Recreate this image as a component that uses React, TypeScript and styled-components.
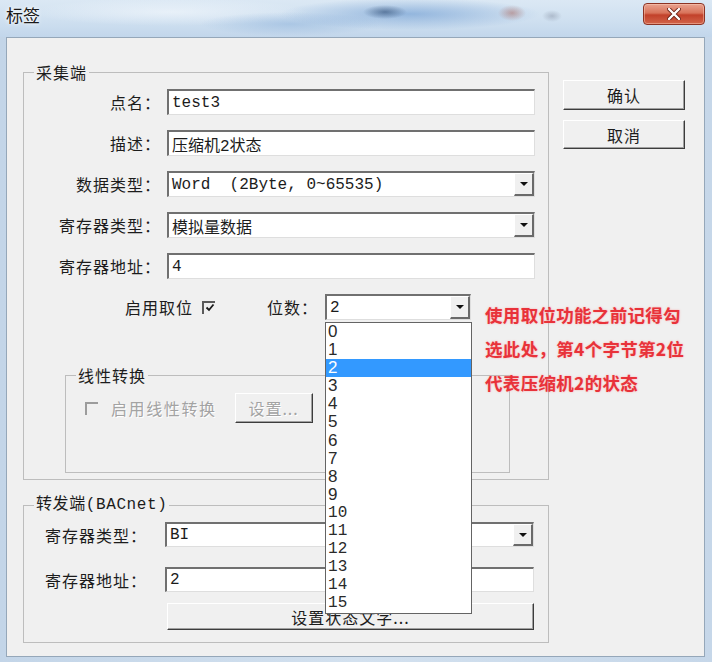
import styled, { createGlobalStyle } from "styled-components";

const UI_FONT = `"Noto Sans CJK SC", "Liberation Sans", sans-serif`;
const MONO_FONT = `"Liberation Mono", "Noto Sans CJK SC", monospace`;

const GlobalStyle = createGlobalStyle`
  html, body {
    margin: 0;
    padding: 0;
  }
  body {
    background: #ffffff;
    font-family: ${UI_FONT};
    color: #1c1c1c;
  }
`;

const Window = styled.div`
  width: 712px;
  height: 662px;
  display: flex;
  flex-direction: column;
  background: linear-gradient(90deg, #c3d5e8 0%, #d3e1ef 50%, #c6d7e9 100%);
`;

const TitleBar = styled.div`
  height: 37px;
  flex: none;
  display: flex;
  align-items: flex-start;
  justify-content: space-between;
  padding: 0 7px 0 6px;
  background:
    radial-gradient(ellipse 22px 7px at 385px 12px, rgba(45, 75, 115, 0.6), transparent),
    radial-gradient(ellipse 14px 8px at 512px 13px, rgba(170, 100, 90, 0.5), transparent),
    radial-gradient(ellipse 10px 6px at 552px 16px, rgba(120, 130, 150, 0.4), transparent),
    radial-gradient(ellipse 130px 16px at 410px 14px, rgba(95, 145, 205, 0.55), transparent),
    radial-gradient(ellipse 90px 12px at 290px 24px, rgba(130, 170, 215, 0.45), transparent),
    radial-gradient(ellipse 140px 14px at 170px 12px, rgba(245, 249, 253, 0.6), transparent),
    linear-gradient(180deg, #dbe8f4 0%, #cfe0f0 55%, #c2d6eb 100%);
`;

const Title = styled.span`
  font-size: 17px;
  line-height: 30px;
  color: #1a1a1a;
  text-shadow: 0 0 5px #ffffff, 0 0 2px #ffffff;
`;

const CloseButton = styled.div`
  margin-top: 3px;
  width: 62px;
  height: 22px;
  box-sizing: border-box;
  border: 1px solid #8c3324;
  border-radius: 4px;
  background: linear-gradient(180deg, #e9a28f 0%, #d8735a 45%, #c2412a 55%, #d2644a 100%);
  display: flex;
  align-items: center;
  justify-content: center;
  box-shadow: inset 0 0 0 1px rgba(255, 210, 190, 0.45);
`;

const Client = styled.div`
  flex: 1;
  margin: 0 7px 5px 6px;
  border: 1px solid #95a7b9;
  background: #f0f0f0;
  display: flex;
  align-items: flex-start;
  gap: 14px;
  padding: 25px 0 13px 16px;
`;

const LeftColumn = styled.div`
  width: 526px;
  display: flex;
  flex-direction: column;
  gap: 16px;
`;

const RightColumn = styled.div`
  width: 122px;
  padding-top: 17px;
  display: flex;
  flex-direction: column;
  gap: 10px;
`;

const Group = styled.fieldset<{ $pad: string; $margin?: string }>`
  margin: ${({ $margin }) => $margin ?? "0"};
  padding: ${({ $pad }) => $pad};
  min-width: 0;
  border: 1px solid #bdbdbd;
`;

const Legend = styled.legend<{ $mono?: boolean }>`
  margin-left: 10px;
  padding: 0 2px;
  font-family: ${({ $mono }) => ($mono ? MONO_FONT : UI_FONT)};
  font-size: 16px;
  line-height: 18px;
  letter-spacing: ${({ $mono }) => ($mono ? "0.6px" : "1px")};
  color: #1c1c1c;
`;

const Stack = styled.div<{ $gap: number; $indent?: number }>`
  display: flex;
  flex-direction: column;
  gap: ${({ $gap }) => $gap}px;
  padding-left: ${({ $indent }) => $indent ?? 0}px;
`;

const FormRow = styled.div<{ $labelWidth: number; $gap: number }>`
  display: grid;
  grid-template-columns: ${({ $labelWidth }) => $labelWidth}px 1fr;
  column-gap: ${({ $gap }) => $gap}px;
  align-items: center;
`;

const FieldLabel = styled.span<{ $align?: "left" | "right" }>`
  font-size: 16px;
  line-height: 20px;
  letter-spacing: 1px;
  white-space: nowrap;
  text-align: ${({ $align }) => $align ?? "right"};
`;

const TextBox = styled.div<{ $h?: number }>`
  height: ${({ $h }) => $h ?? 26}px;
  box-sizing: border-box;
  background: #ffffff;
  border-style: solid;
  border-width: 2px 1px 1px 2px;
  border-color: #707070 #dedede #dedede #707070;
  display: flex;
  align-items: center;
  padding-left: 3px;
  font-family: ${MONO_FONT};
  font-size: 16px;
  color: #1c1c1c;
  white-space: pre;
  overflow: hidden;
`;

const ComboBox = styled(TextBox)`
  justify-content: space-between;
  overflow: visible;
  position: relative;
`;

const DropButton = styled.span`
  width: 20px;
  align-self: stretch;
  box-sizing: border-box;
  background: #f0f0f0;
  border-style: solid;
  border-width: 1px 2px 2px 1px;
  border-color: #ffffff #6a6a6a #6a6a6a #ffffff;
  display: flex;
  align-items: center;
  justify-content: center;

  &::after {
    content: "";
    border-left: 4px solid transparent;
    border-right: 4px solid transparent;
    border-top: 4px solid #111111;
  }
`;

const BitRow = styled.div`
  display: flex;
  align-items: center;
  margin-top: 15px;
  padding-left: 101px;
`;

const CheckText = styled.span<{ $disabled?: boolean }>`
  font-size: 16px;
  line-height: 20px;
  letter-spacing: ${({ $disabled }) => ($disabled ? "1.6px" : "1px")};
  color: ${({ $disabled }) => ($disabled ? "#a3a3a3" : "#1c1c1c")};
  text-shadow: ${({ $disabled }) => ($disabled ? "1px 1px 0 #ffffff" : "none")};
  white-space: nowrap;
`;

const CheckBox = styled.span<{ $disabled?: boolean }>`
  width: 13px;
  height: 13px;
  flex: none;
  box-sizing: border-box;
  border-style: solid;
  border-width: 2px 0 0 2px;
  border-color: ${({ $disabled }) => ($disabled ? "#9c9c9c" : "#5a5a5a")};
  display: inline-flex;
  align-items: center;
  justify-content: center;
`;

const BitCount = styled.div`
  position: relative;
  width: 146px;
  margin-left: 7px;
`;

const BitLabel = styled(FieldLabel)`
  margin-left: 52px;
`;

const DropList = styled.div`
  position: absolute;
  top: calc(100% + 2px);
  left: 0;
  width: 147px;
  box-sizing: border-box;
  background: #ffffff;
  border: 1px solid #646464;
  z-index: 5;
`;

const ListItem = styled.div<{ $selected?: boolean; $serif?: boolean }>`
  height: 18.1px;
  line-height: 18px;
  padding-left: 2px;
  font-family: ${({ $serif }) => ($serif ? MONO_FONT : `"Liberation Sans", sans-serif`)};
  font-size: ${({ $serif }) => ($serif ? "16px" : "17px")};
  color: ${({ $selected }) => ($selected ? "#ffffff" : "#2a2a2a")};
  background: ${({ $selected }) => ($selected ? "#3399ff" : "transparent")};
`;

const Annotation = styled.div`
  position: absolute;
  top: 4px;
  left: calc(100% + 14px);
  white-space: nowrap;
  font-size: 17.5px;
  font-weight: 700;
  line-height: 34px;
  letter-spacing: 0.3px;
  color: #e8323a;
  text-shadow: 0 0 2px rgba(255, 140, 140, 0.7);
  z-index: 6;
`;

const LinearRow = styled.div`
  display: flex;
  align-items: center;
  padding-left: 19px;
`;

const PushButton = styled.div<{ $h: number; $w?: number; $disabled?: boolean }>`
  height: ${({ $h }) => $h}px;
  width: ${({ $w }) => ($w ? `${$w}px` : "auto")};
  flex: none;
  box-sizing: border-box;
  background: #f0f0f0;
  border-style: solid;
  border-width: 1px;
  border-color: #ffffff #3c3c3c #3c3c3c #ffffff;
  box-shadow: inset -1px -1px 0 #a0a0a0;
  display: flex;
  align-items: center;
  justify-content: center;
  font-size: 16px;
  letter-spacing: 1px;
  color: ${({ $disabled }) => ($disabled ? "#a3a3a3" : "#1c1c1c")};
  text-shadow: ${({ $disabled }) => ($disabled ? "1px 1px 0 #ffffff" : "none")};
  white-space: nowrap;
`;

const CheckMark = () => (
  <svg width="10" height="10" viewBox="0 0 10 10">
    <path d="M1.5 4.5 L4 7 L8.5 1.5" fill="none" stroke="#1a1a1a" strokeWidth="1.8" />
  </svg>
);

const CloseGlyph = () => (
  <svg width="14" height="12" viewBox="0 0 14 12">
    <path d="M2 1 L12 11 M12 1 L2 11" stroke="#6b2217" strokeWidth="4" strokeLinecap="round" />
    <path d="M2 1 L12 11 M12 1 L2 11" stroke="#ffffff" strokeWidth="2.4" strokeLinecap="round" />
  </svg>
);

const bits = Array.from({ length: 16 }, (_, i) => i);

export default function App() {
  return (
    <>
      <GlobalStyle />
      <Window>
        <TitleBar>
          <Title>标签</Title>
          <CloseButton>
            <CloseGlyph />
          </CloseButton>
        </TitleBar>
        <Client>
          <LeftColumn>
            <Group $pad="8px 13px 6px 0">
              <Legend>采集端</Legend>
              <Stack $gap={15}>
                <FormRow $labelWidth={137} $gap={6}>
                  <FieldLabel>点名：</FieldLabel>
                  <TextBox>test3</TextBox>
                </FormRow>
                <FormRow $labelWidth={137} $gap={6}>
                  <FieldLabel>描述：</FieldLabel>
                  <TextBox>压缩机2状态</TextBox>
                </FormRow>
                <FormRow $labelWidth={137} $gap={6}>
                  <FieldLabel>数据类型：</FieldLabel>
                  <ComboBox>
                    <span>Word  (2Byte, 0~65535)</span>
                    <DropButton />
                  </ComboBox>
                </FormRow>
                <FormRow $labelWidth={137} $gap={6}>
                  <FieldLabel>寄存器类型：</FieldLabel>
                  <ComboBox>
                    <span>模拟量数据</span>
                    <DropButton />
                  </ComboBox>
                </FormRow>
                <FormRow $labelWidth={137} $gap={6}>
                  <FieldLabel>寄存器地址：</FieldLabel>
                  <TextBox>4</TextBox>
                </FormRow>
              </Stack>

              <BitRow>
                <CheckText>启用取位</CheckText>
                <CheckBox style={{ marginLeft: 9 }}>
                  <CheckMark />
                </CheckBox>
                <BitLabel>位数：</BitLabel>
                <BitCount>
                  <ComboBox>
                    <span>2</span>
                    <DropButton />
                  </ComboBox>
                  <DropList>
                    {bits.map((b) => (
                      <ListItem key={b} $selected={b === 2} $serif={b >= 10}>
                        {b}
                      </ListItem>
                    ))}
                  </DropList>
                  <Annotation>
                    使用取位功能之前记得勾
                    <br />
                    选此处，第4个字节第2位
                    <br />
                    代表压缩机2的状态
                  </Annotation>
                </BitCount>
              </BitRow>

              <Group $pad="9px 0 49px 0" $margin="46px 25px 0 41px">
                <Legend>线性转换</Legend>
                <LinearRow>
                  <CheckBox $disabled />
                  <CheckText $disabled style={{ marginLeft: 13 }}>
                    启用线性转换
                  </CheckText>
                  <PushButton $h={30} $w={78} $disabled style={{ marginLeft: 18 }}>
                    设置...
                  </PushButton>
                </LinearRow>
              </Group>
            </Group>

            <Group $pad="8px 14px 12px 0">
              <Legend $mono>转发端(BACnet)</Legend>
              <Stack $gap={20} $indent={21}>
                <FormRow $labelWidth={120} $gap={0}>
                  <FieldLabel $align="left">寄存器类型：</FieldLabel>
                  <ComboBox $h={25}>
                    <span>BI</span>
                    <DropButton />
                  </ComboBox>
                </FormRow>
                <FormRow $labelWidth={120} $gap={0}>
                  <FieldLabel $align="left">寄存器地址：</FieldLabel>
                  <TextBox $h={25}>2</TextBox>
                </FormRow>
              </Stack>
              <FormRow $labelWidth={143} $gap={0} style={{ marginTop: 11 }}>
                <span />
                <PushButton $h={27}>设置状态文字...</PushButton>
              </FormRow>
            </Group>
          </LeftColumn>

          <RightColumn>
            <PushButton $h={30}>确认</PushButton>
            <PushButton $h={29}>取消</PushButton>
          </RightColumn>
        </Client>
      </Window>
    </>
  );
}
